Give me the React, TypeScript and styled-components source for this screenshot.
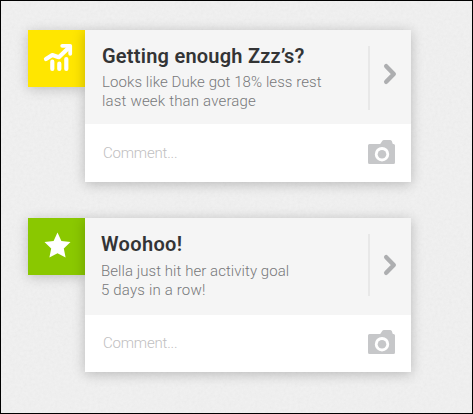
import React from "react";
import styled, { createGlobalStyle } from "styled-components";

const GlobalStyle = createGlobalStyle`
  * { box-sizing: border-box; }
  body { margin: 0; background: #ededed; }
`;

const grain = encodeURIComponent(
  `<svg xmlns="http://www.w3.org/2000/svg" width="200" height="200"><filter id="n"><feTurbulence type="fractalNoise" baseFrequency="0.35" numOctaves="3" stitchTiles="stitch"/><feColorMatrix values="0 0 0 0 0.5  0 0 0 0 0.5  0 0 0 0 0.5  0.16 0 0 0 -0.05"/></filter><rect width="200" height="200" filter="url(#n)"/></svg>`
);

const Page = styled.main`
  display: flex;
  flex-direction: column;
  gap: 36px;
  width: 473px;
  height: 414px;
  padding: 29px 0 0 27px;
  border: 1px solid #000;
  background: #f0f0f0 url("data:image/svg+xml,${grain}");
  font-family: Roboto, "Liberation Sans", sans-serif;
`;

const Notice = styled.article`
  display: flex;
  align-items: flex-start;
  width: 383px;
`;

const Badge = styled.div<{ $color: string }>`
  display: flex;
  width: 57px;
  height: 57px;
  background: ${(p) => p.$color};
  box-shadow: 0 2px 12px rgba(0, 0, 0, 0.2);
`;

const Card = styled.div`
  position: relative;
  width: 326px;
  background: #fff;
  box-shadow: 0 2px 12px rgba(0, 0, 0, 0.23);
`;

const Summary = styled.div<{ $height: number; $inset: number }>`
  display: flex;
  height: ${(p) => p.$height}px;
  padding: 16px 0 0 ${(p) => p.$inset}px;
  background: #f5f5f5;
`;

const Copy = styled.div`
  flex: 1;
  white-space: nowrap;
`;

const Title = styled.h2<{ $tracking: number; $gap: number }>`
  margin: 0;
  padding-bottom: ${(p) => p.$gap}px;
  font-size: 20px;
  line-height: 21px;
  font-weight: 600;
  letter-spacing: ${(p) => p.$tracking}px;
  color: #333435;
`;

const Line = styled.p<{ $tracking: number }>`
  margin: 0;
  font-size: 15px;
  line-height: 19px;
  font-weight: 300;
  letter-spacing: ${(p) => p.$tracking}px;
  color: #77787a;
`;

const Open = styled.button<{ $height: number; $drop: number }>`
  display: flex;
  width: 43px;
  height: ${(p) => p.$height}px;
  padding: ${(p) => p.$drop}px 0 0 13px;
  border: 0;
  border-left: 2px solid #e8e8e8;
  background: none;
`;

const CommentBar = styled.div<{ $height: number }>`
  display: flex;
  align-items: flex-end;
  justify-content: space-between;
  height: ${(p) => p.$height}px;
  padding: 0 16px 17px 18px;
`;

const Placeholder = styled.span`
  padding-bottom: 2px;
  font-size: 15px;
  line-height: 20px;
  font-weight: 300;
  letter-spacing: -0.2px;
  color: #bfc0c1;
`;

const TrendIcon = () => (
  <svg width="57" height="57" fill="none" stroke="#fff" strokeWidth="4.2" strokeLinecap="round" strokeLinejoin="round">
    <path d="M18 29 24.3 25 30.8 27.2 41 17.5" />
    <path d="M34.2 15.8H42.2V23.8" strokeWidth="3.8" />
    <path d="M24.3 31.7V38.9M31.3 33.7V38.9M38.3 29V38.9" />
  </svg>
);

const StarIcon = () => (
  <svg width="57" height="57" fill="#fff">
    <path d="M29.5 14.5 33.4 23 42.5 24 35.8 30.5 37.6 39.5 29.5 35.3 21.4 39.5 23.2 30.5 16.5 24 25.6 23Z" />
  </svg>
);

const ChevronIcon = () => (
  <svg width="14" height="22" fill="none" stroke="#adaeb0" strokeWidth="4.4" strokeLinecap="round" strokeLinejoin="round">
    <path d="M3.2 3.2 10.8 11 3.2 18.8" />
  </svg>
);

const CameraIcon = () => (
  <svg width="27" height="26">
    <path
      fill="#c6c7c9"
      fillRule="evenodd"
      d="M1.5 5H12.2L14.2 2Q14.8 1 16 1H22Q23.2 1 23.8 2L24.8 5H25.5Q27 5 27 6.5V23.5Q27 25 25.5 25H1.5Q0 25 0 23.5V6.5Q0 5 1.5 5ZM14 8A7.2 7.2 0 1 0 14 22.4A7.2 7.2 0 1 0 14 8Z"
    />
    <circle cx="14" cy="15.2" r="4.3" fill="#c6c7c9" />
  </svg>
);

type Item = {
  color: string;
  icon: React.ReactNode;
  title: string;
  titleTracking: number;
  titleGap: number;
  lines: { text: string; tracking: number }[];
  inset: number;
  summaryHeight: number;
  commentHeight: number;
  dividerHeight: number;
  chevronDrop: number;
};

const items: Item[] = [
  {
    color: "#ffe600",
    icon: <TrendIcon />,
    title: "Getting enough Zzz’s?",
    titleTracking: 0.23,
    titleGap: 6,
    lines: [
      { text: "Looks like Duke got 18% less rest", tracking: 0.08 },
      { text: "last week than average", tracking: 0.18 },
    ],
    inset: 17,
    summaryHeight: 94,
    commentHeight: 58,
    dividerHeight: 64,
    chevronDrop: 17,
  },
  {
    color: "#8ac800",
    icon: <StarIcon />,
    title: "Woohoo!",
    titleTracking: 0.35,
    titleGap: 7,
    lines: [
      { text: "Bella just hit her activity goal", tracking: 0.06 },
      { text: "5 days in a row!", tracking: 0.18 },
    ],
    inset: 16,
    summaryHeight: 97,
    commentHeight: 57,
    dividerHeight: 62,
    chevronDrop: 20,
  },
];

export default function App() {
  return (
    <>
      <GlobalStyle />
      <Page>
        {items.map((item) => (
          <Notice key={item.title}>
            <Badge $color={item.color}>{item.icon}</Badge>
            <Card>
              <Summary $height={item.summaryHeight} $inset={item.inset}>
                <Copy>
                  <Title $tracking={item.titleTracking} $gap={item.titleGap}>
                    {item.title}
                  </Title>
                  {item.lines.map((line) => (
                    <Line key={line.text} $tracking={line.tracking}>
                      {line.text}
                    </Line>
                  ))}
                </Copy>
                <Open aria-label="Open" $height={item.dividerHeight} $drop={item.chevronDrop}>
                  <ChevronIcon />
                </Open>
              </Summary>
              <CommentBar $height={item.commentHeight}>
                <Placeholder>Comment...</Placeholder>
                <CameraIcon />
              </CommentBar>
            </Card>
          </Notice>
        ))}
      </Page>
    </>
  );
}
